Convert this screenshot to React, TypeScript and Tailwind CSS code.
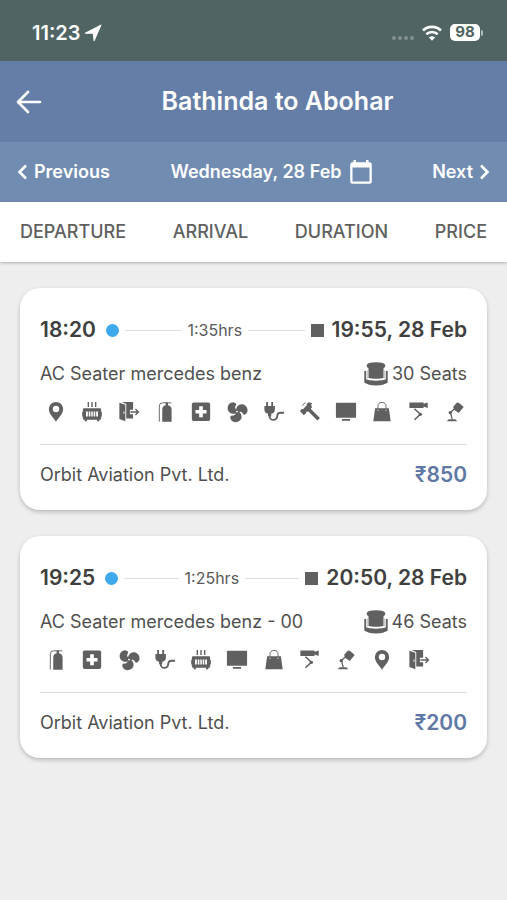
import type { ReactNode } from "react";

type IconName =
  | "pin"
  | "heater"
  | "exit"
  | "extinguisher"
  | "firstAid"
  | "fan"
  | "plug"
  | "hammer"
  | "tv"
  | "bag"
  | "cctv"
  | "lamp";

type Trip = {
  departure: string;
  arrival: string;
  duration: string;
  bus: string;
  seats: number;
  operator: string;
  price: number;
  amenities: IconName[];
};

const trips: Trip[] = [
  {
    departure: "18:20",
    arrival: "19:55, 28 Feb",
    duration: "1:35hrs",
    bus: "AC Seater mercedes benz",
    seats: 30,
    operator: "Orbit Aviation Pvt. Ltd.",
    price: 850,
    amenities: [
      "pin",
      "heater",
      "exit",
      "extinguisher",
      "firstAid",
      "fan",
      "plug",
      "hammer",
      "tv",
      "bag",
      "cctv",
      "lamp",
    ],
  },
  {
    departure: "19:25",
    arrival: "20:50, 28 Feb",
    duration: "1:25hrs",
    bus: "AC Seater mercedes benz - 00",
    seats: 46,
    operator: "Orbit Aviation Pvt. Ltd.",
    price: 200,
    amenities: [
      "extinguisher",
      "firstAid",
      "fan",
      "plug",
      "heater",
      "tv",
      "bag",
      "cctv",
      "lamp",
      "pin",
      "exit",
    ],
  },
];

const sortOptions = ["DEPARTURE", "ARRIVAL", "DURATION", "PRICE"];

const fanBlade =
  "M12.500 12.500C9.500 15 2.500 14.500 1.800 8.500 1.500 4.500 4.500 1.200 8.500 1.500c2.600.2 3.200 2.200 2 3.700C9.300 6.800 10 9 12.500 10.500z";

const icons: Record<IconName, ReactNode> = {
  pin: (
    <path
      fillRule="evenodd"
      d="M12 1a7.800 7.800 0 0 0-7.800 7.800c0 5.200 5.200 10 7.800 13.800 2.600-3.800 7.800-8.600 7.800-13.800A7.800 7.800 0 0 0 12 1zm0 4.200a3.500 3.500 0 1 1 0 7 3.500 3.500 0 0 1 0-7z"
    />
  ),
  heater: (
    <>
      <path
        d="M8 1v5.500M12 1v5.500M16 1v5.500"
        stroke="currentColor"
        strokeWidth="1.500"
      />
      <path
        fillRule="evenodd"
        d="M3.500 8h17A1.500 1.500 0 0 1 22 9.500v9.500a1.500 1.500 0 0 1-1.500 1.500H20V22h-2.500v-1.500h-11V22H4v-1.500h-.5A1.500 1.500 0 0 1 2 19V9.500A1.500 1.500 0 0 1 3.500 8zM5.500 11.500v5.500h13v-5.500z"
      />
      <path
        d="M8 11v6.500M10.700 11v6.500M13.400 11v6.500M16 11v6.500"
        stroke="currentColor"
        strokeWidth="1"
      />
      <path d="M1.300 12H2.500v5H1.300zM21.500 12h1.200v5h-1.200z" />
    </>
  ),
  exit: (
    <>
      <path
        fillRule="evenodd"
        d="M1.500 2 8 4v18l-6.500-2.500zM6 11.500V14h1v-2.500z"
      />
      <path d="M4 1h12.500v8.500H13v5h3.500V19H9V3.200z" />
      <path
        d="M13.500 12H22M19 8.800l3.300 3.200-3.300 3.200"
        fill="none"
        stroke="currentColor"
        strokeWidth="1.500"
      />
    </>
  ),
  extinguisher: (
    <>
      <path
        d="M5.800 22.500V5.500a3.500 3.500 0 0 1 3.500-3.500H19"
        fill="none"
        stroke="currentColor"
        strokeWidth="1"
      />
      <path d="M12.700 1.500h2.600v3.200a4.900 4.900 0 0 1 3.900 4.800V22.500H9V9.500a4.900 4.900 0 0 1 3.700-4.800z" />
    </>
  ),
  firstAid: (
    <path
      fillRule="evenodd"
      d="M4 1.500h16a2 2 0 0 1 2 2v16.300a2 2 0 0 1-2 2H4a2 2 0 0 1-2-2V3.500a2 2 0 0 1 2-2zm6 4.200v4H6v4h4v4h4v-4h4v-4h-4v-4z"
    />
  ),
  fan: (
    <>
      <path d={fanBlade} />
      <path d={fanBlade} transform="rotate(120 12 11.500)" />
      <path d={fanBlade} transform="rotate(240 12 11.500)" />
      <circle cx="12" cy="11.500" r="1" fill="#fff" />
    </>
  ),
  plug: (
    <>
      <path d="M3.500 1h2v4.500h3.500V1h2v4.500h2V9a5 5 0 0 1-4 5v2.500H5.500V14a5 5 0 0 1-4-5V5.500h2z" />
      <path
        d="M7.300 14.500v2a4.100 4.100 0 0 0 8.200 0c0-2.500 1.500-3.700 4-3.700H23"
        fill="none"
        stroke="currentColor"
        strokeWidth="2"
      />
    </>
  ),
  hammer: (
    <>
      <path d="m1 11 2.200-2.500 1.200.4 4.100-4.400-.3-1.200 2.300-2 4 1.200-1.200 1.400.8 3.200-5.200 4.800-1.200-.2.200 1.500-2.700 2.400z" />
      <path d="m10.500 9 11 11" stroke="currentColor" strokeWidth="3.800" />
      <path
        d="M3.800 5.200A7 7 0 0 1 7 1.700"
        fill="none"
        stroke="currentColor"
        strokeWidth="1"
      />
    </>
  ),
  tv: (
    <path d="M1.700 2h20.600a.7.700 0 0 1 .7.700v15a.7.700 0 0 1-.7.700H1.700a.7.700 0 0 1-.7-.7v-15a.7.700 0 0 1 .7-.7zM7.500 19.700h9v1.800h-9z" />
  ),
  bag: (
    <>
      <path
        fillRule="evenodd"
        d="M4.500 8h15l2 14.200h-19zM7 9.500v1.200h1.200V9.500zm8.800 0v1.200H17V9.500z"
      />
      <path
        d="M7.600 10V6a4.400 4.400 0 0 1 8.800 0v4"
        fill="none"
        stroke="currentColor"
        strokeWidth="1"
      />
    </>
  ),
  cctv: (
    <>
      <path d="M1.500 1.500H17V3l4.500-1.500v6L17 6v1.500H1.500z" />
      <path
        d="m7 8.500 6.500 6-6.500 6"
        fill="none"
        stroke="currentColor"
        strokeWidth="1.700"
      />
      <circle cx="13.500" cy="14.500" r="1.800" />
    </>
  ),
  lamp: (
    <>
      <path d="m10 6.300 4.200-4.600 2.300.5 5 4.300-5.500 6.500-5-3.500z" />
      <path
        d="M11.500 8.500 7 12.500l2 7.500"
        fill="none"
        stroke="currentColor"
        strokeWidth="1.400"
      />
      <circle cx="6.800" cy="12.700" r="1.800" />
      <path d="M3.500 22c0-1.500 1.500-2.200 3-2.200h4.500c1.500 0 3 .7 3 2.200z" />
    </>
  ),
};

const AmenityIcon = ({ name }: { name: IconName }) => (
  <svg
    viewBox="0 0 24 24"
    className="size-[22px] justify-self-center"
    fill="currentColor"
    aria-hidden="true"
  >
    {icons[name]}
  </svg>
);

const SeatIcon = () => (
  <svg
    viewBox="0 0 24 24"
    className="size-6"
    fill="currentColor"
    aria-hidden="true"
  >
    <path d="M2.800 2.800C4 1 7.500.3 12 .3s8 .7 9.200 2.500c.3 1.200-.2 2.700-1.700 3.700v9.200c-2 .8-4.500 1-7.500 1s-5.500-.2-7.500-1V6.500C3 5.500 2.500 4 2.800 2.800z" />
    <path d="M.3 9h1.900v8.300c2.600 1 5.800 1.400 9.800 1.400s7.200-.4 9.800-1.400V9h1.900v11.500c-2.800 2-6.500 3-11.700 3S3.100 22.500.3 20.500z" />
    <path d="M3 8.500h.8v8H3zM20.200 8.500h.8v8h-.8z" opacity=".4" />
  </svg>
);

const StatusBar = () => (
  <div className="flex h-[61px] items-center justify-between bg-[#4f6463] pr-6 pl-8 text-white">
    <div className="flex items-center gap-1 pt-1">
      <span className="text-xl font-semibold">11:23</span>
      <svg
        viewBox="0 0 16 16"
        className="size-[18px]"
        fill="currentColor"
        stroke="currentColor"
        strokeLinejoin="round"
        aria-hidden="true"
      >
        <path d="M15 1 9 14.800 8.300 8.200H1.200z" />
      </svg>
    </div>
    <div className="flex items-center gap-2 pt-1">
      <div className="flex gap-0.5 pt-2.5">
        {[0, 1, 2, 3].map((dot) => (
          <span key={dot} className="size-1 rounded-full bg-[#839190]" />
        ))}
      </div>
      <svg
        viewBox="0 0 20 16"
        className="h-4 w-5"
        fill="none"
        stroke="currentColor"
        aria-hidden="true"
      >
        <path d="M1 5.500a13 13 0 0 1 18 0" strokeWidth="2.800" />
        <path d="M4.300 9.200a8.300 8.300 0 0 1 11.400 0" strokeWidth="2.600" />
        <path
          d="M10 15.700 6.900 12.600a4.600 4.600 0 0 1 6.200 0z"
          fill="currentColor"
          stroke="none"
        />
      </svg>
      <div className="flex items-center gap-px">
        <span className="flex h-[17px] w-[30px] items-center justify-center rounded-[5px] bg-white text-[15px] font-bold text-[#4f6463]">
          98
        </span>
        <span className="h-1.5 w-0.5 rounded-r-full bg-[#b5bfbe]" />
      </div>
    </div>
  </div>
);

const TripCard = ({ trip }: { trip: Trip }) => (
  <article className="rounded-[20px] bg-white px-5 pt-7 pb-[21px] shadow-[0_2px_4px_rgba(0,0,0,0.22)]">
    <div className="flex h-7 items-center text-[#404040]">
      <span className="text-[21px] font-semibold">{trip.departure}</span>
      <span className="ml-2.5 size-[13px] rounded-full bg-[#3fa9ee]" />
      <span className="mx-1.5 h-px flex-1 bg-[#dedede]" />
      <span className="text-base text-[#5a5a5a]">{trip.duration}</span>
      <span className="mx-1.5 h-px flex-1 bg-[#dedede]" />
      <span className="mr-2 size-[13px] bg-[#606060]" />
      <span className="text-[21px] font-semibold">{trip.arrival}</span>
    </div>
    <div className="mt-4 flex h-7 items-center justify-between text-lg text-[#505050]">
      <span>{trip.bus}</span>
      <span className="flex items-center gap-1">
        <span className="text-[#606060]">
          <SeatIcon />
        </span>
        {trip.seats} Seats
      </span>
    </div>
    <div className="mt-3 -mr-1.5 -ml-0.5 grid h-6 grid-cols-12 items-center text-[#606060]">
      {trip.amenities.map((name) => (
        <AmenityIcon key={name} name={name} />
      ))}
    </div>
    <div className="mt-5 flex h-[45px] items-end justify-between border-t border-[#dcdcdc] text-lg leading-7 text-[#505050]">
      <span>{trip.operator}</span>
      <span className="text-[21px] font-semibold text-[#5f78a6]">
        ₹{trip.price}
      </span>
    </div>
  </article>
);

export default function App() {
  return (
    <div className="min-h-screen bg-[#eeeeee] font-['Inter','Noto_Sans',sans-serif]">
      <StatusBar />
      <header className="flex h-[81px] items-center bg-[#647ea8] px-4 text-white">
        <button type="button" aria-label="Back" className="w-7">
          <svg
            viewBox="0 0 26 26"
            className="size-[26px]"
            fill="none"
            stroke="currentColor"
            strokeWidth="2.600"
            strokeLinecap="round"
            strokeLinejoin="round"
            aria-hidden="true"
          >
            <path d="M24 13H2M12 3 2 13l10 10" />
          </svg>
        </button>
        <h1 className="flex-1 pl-5 text-center text-[25px] font-semibold">
          Bathinda to Abohar
        </h1>
      </header>
      <nav className="flex h-[60px] items-center justify-between bg-[#718cb1] px-4 text-lg font-semibold text-white">
        <button type="button" className="flex items-center gap-1.5">
          <svg
            viewBox="0 0 12 16"
            className="h-4 w-3"
            fill="none"
            stroke="currentColor"
            strokeWidth="2.600"
            aria-hidden="true"
          >
            <path d="M10 1.500 3.500 8l6.500 6.500" />
          </svg>
          Previous
        </button>
        <button type="button" className="flex items-center gap-2">
          Wednesday, 28 Feb
          <svg
            viewBox="0 0 22 24"
            className="h-6 w-[22px]"
            fill="currentColor"
            aria-hidden="true"
          >
            <path
              fillRule="evenodd"
              d="M3.500 0h2.500v2.200h10V0h2.500v2.200h1a2.300 2.300 0 0 1 2.300 2.300v17a2.300 2.300 0 0 1-2.300 2.300h-17A2.300 2.300 0 0 1 .2 21.500v-17a2.300 2.300 0 0 1 2.300-2.300h1zM2.500 7.500v14h17v-14z"
            />
          </svg>
        </button>
        <button type="button" className="flex items-center gap-1.5">
          Next
          <svg
            viewBox="0 0 12 16"
            className="h-4 w-3"
            fill="none"
            stroke="currentColor"
            strokeWidth="2.600"
            aria-hidden="true"
          >
            <path d="M2 1.500 8.500 8 2 14.500" />
          </svg>
        </button>
      </nav>
      <div className="flex h-[60px] items-center justify-between bg-white px-5 text-lg font-medium text-[#606060] shadow-[0_1px_3px_rgba(0,0,0,0.25)]">
        {sortOptions.map((option) => (
          <button key={option} type="button">
            {option}
          </button>
        ))}
      </div>
      <main className="flex flex-col gap-[26px] px-5 py-[26px]">
        {trips.map((trip) => (
          <TripCard key={trip.departure} trip={trip} />
        ))}
      </main>
    </div>
  );
}
